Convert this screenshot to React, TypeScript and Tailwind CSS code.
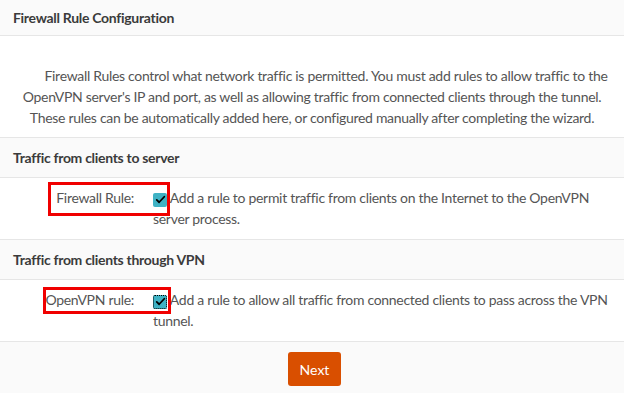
function Check({ focus }: { focus?: boolean }) {
  return (
    <span
      className={`relative inline-flex h-[14px] w-[14px] shrink-0 items-center justify-center rounded-[2px] bg-[#3fb2c4] align-[-2px] ${
        focus ? "outline outline-1 outline-dotted outline-black outline-offset-[-1px]" : ""
      }`}
    >
      <svg viewBox="0 0 16 16" className="h-[11px] w-[11px]">
        <path d="M2.5 8.5l3.5 3.5 7.5-8" fill="none" stroke="#000" strokeWidth="2.6" strokeLinecap="round" strokeLinejoin="round" />
      </svg>
    </span>
  );
}

function Section({ title }: { title: string }) {
  return (
    <div className="flex h-[40px] items-center border-b border-[#e6e6e6] bg-[#fafafa] px-[13px] font-bold tracking-[-0.3px] text-[#3b3b3b]">
      {title}
    </div>
  );
}

interface RowProps {
  label: string;
  text: string;
  box: string;
  focus?: boolean;
}

function Row({ label, text, box, focus }: RowProps) {
  return (
    <div className="relative flex border-b border-[#e6e6e6] bg-white pt-[9px] pb-[10px]">
      <div className="w-[134px] shrink-0 text-right leading-[21px]">{label}</div>
      <div className="ml-[19px] w-[455px] leading-[21px]">
        <Check focus={focus} /> {text}
      </div>
      <div className={`pointer-events-none absolute border-[3px] border-[#f00000] ${box}`} />
    </div>
  );
}

export default function App() {
  return (
    <div
      className="h-[393px] w-[624px] overflow-hidden bg-[#fafafa] text-[14px] tracking-[-0.3px] text-[#555]"
      style={{ fontFamily: "Lato, 'Noto Sans', sans-serif" }}
    >
      <div className="flex h-[36px] items-center border-b border-[#e6e6e6] px-[13px] font-bold text-[#3b3b3b]">
        Firewall Rule Configuration
      </div>
      <div className="border-b border-[#e6e6e6] bg-white pt-[29px] pb-[9px] text-center leading-[21px]">
        <div className="pl-[28px]">Firewall Rules control what network traffic is permitted. You must add rules to allow traffic to the</div>
        <div>OpenVPN server's IP and port, as well as allowing traffic from connected clients through the tunnel.</div>
        <div>These rules can be automatically added here, or configured manually after completing the wizard.</div>
      </div>
      <Section title="Traffic from clients to server" />
      <Row
        label="Firewall Rule:"
        text="Add a rule to permit traffic from clients on the Internet to the OpenVPN server process."
        box="left-[48px] top-[4px] h-[34px] w-[122px]"
      />
      <Section title="Traffic from clients through VPN" />
      <Row
        label="OpenVPN rule:"
        text="Add a rule to allow all traffic from connected clients to pass across the VPN tunnel."
        box="left-[43px] top-[7px] h-[27px] w-[128px]"
        focus
      />
      <div className="flex justify-center pt-[10px]">
        <button className="ml-[5px] h-[34px] w-[53px] rounded-[3px] bg-[#d94f00] text-[14px] tracking-normal text-white">
          Next
        </button>
      </div>
    </div>
  );
}
